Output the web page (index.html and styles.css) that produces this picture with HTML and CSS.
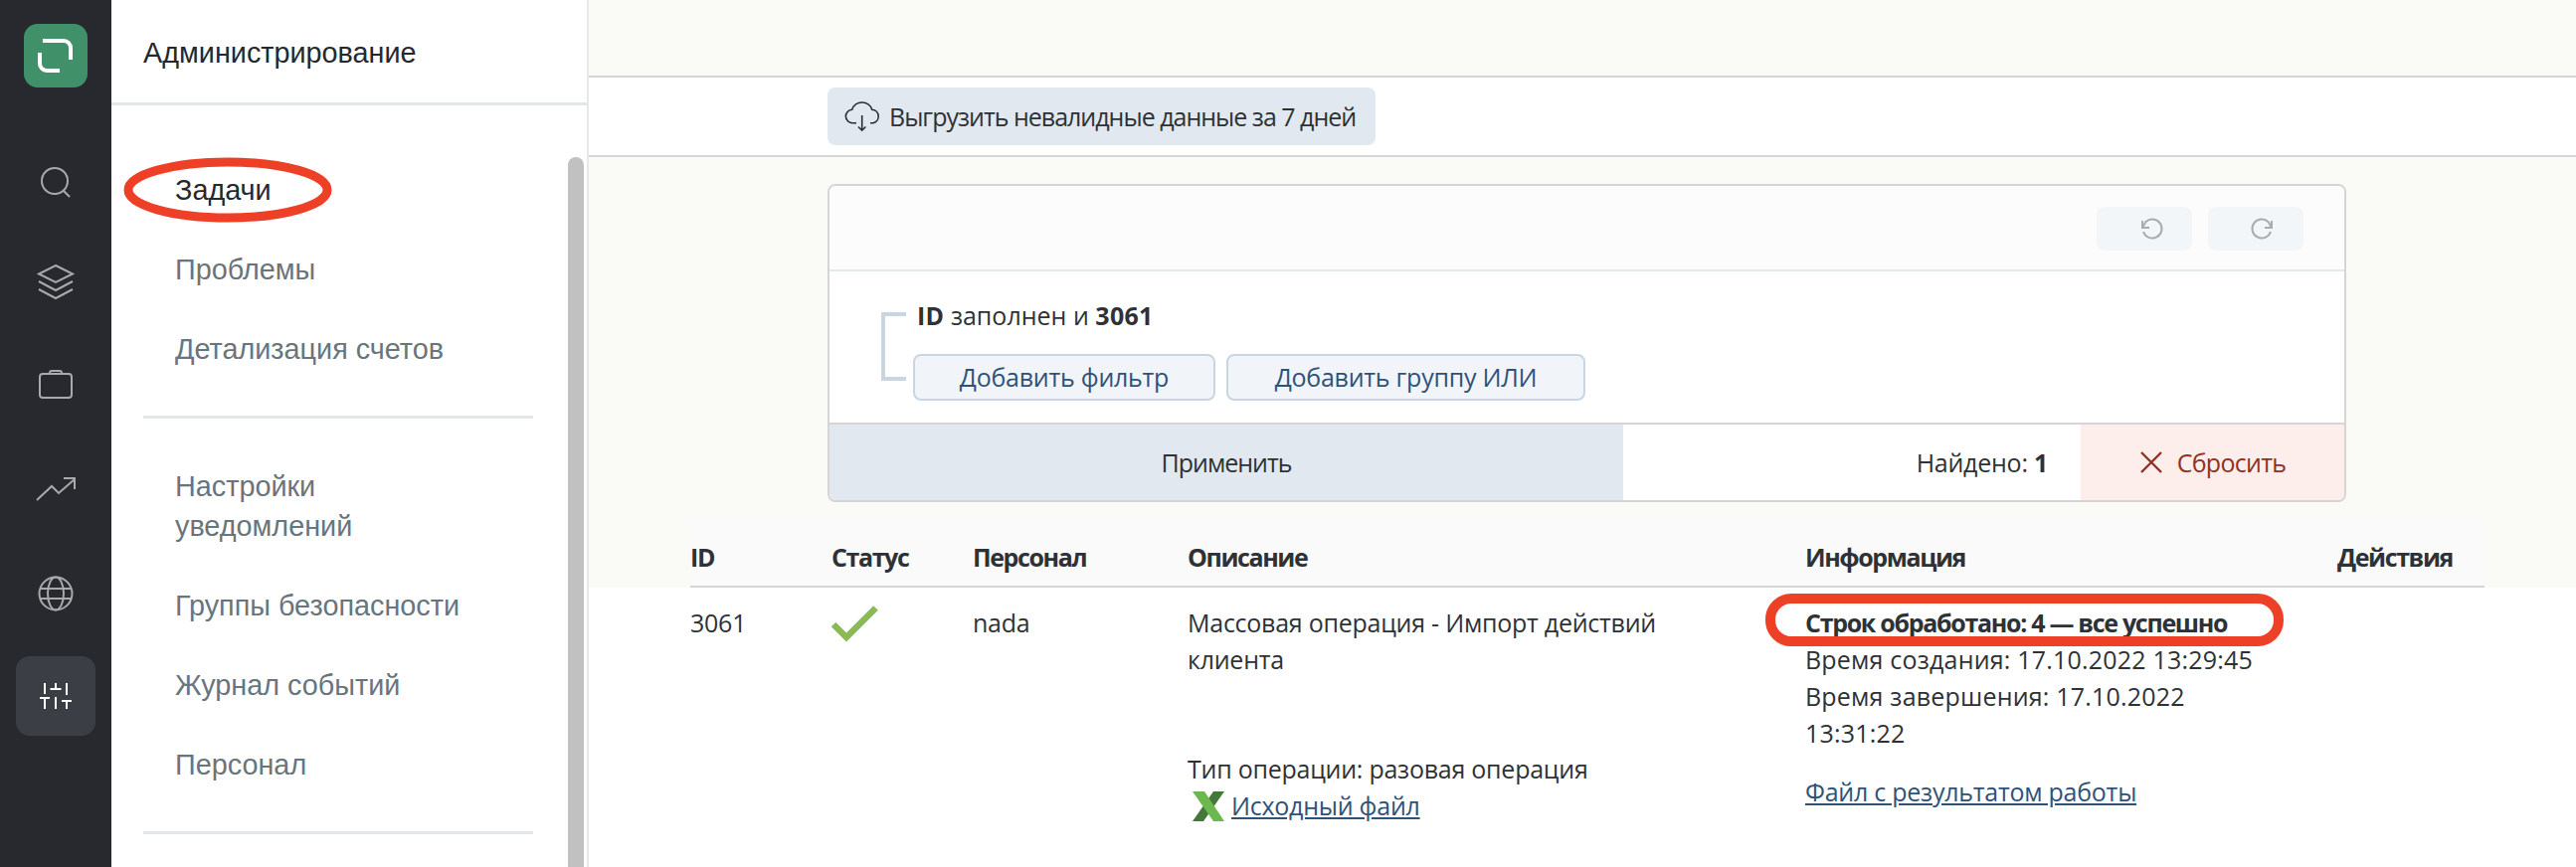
FILE: index.html
```html
<!DOCTYPE html>
<html lang="ru">
<head>
    <meta charset="UTF-8">
    <title>Администрирование</title>
    <link rel="stylesheet" href="styles.css">
</head>
<body>
    <div class="app">
        <nav class="rail">
            <div class="logo">
                <svg width="64" height="64" viewBox="0 0 64 64" fill="none" stroke="#fff" stroke-width="4">
                    <path d="M19 17h21a7 7 0 0 1 7 7v12"/>
                    <path d="M16 29v11a7 7 0 0 0 7 7h13"/>
                </svg>
            </div>
            <a class="rail-item">
                <svg width="40" height="40" viewBox="0 0 40 40" fill="none" stroke="#a8a9ab" stroke-width="2">
                    <circle cx="19" cy="19" r="13"/>
                    <path d="M28 29l6 6"/>
                </svg>
            </a>
            <a class="rail-item">
                <svg width="40" height="40" viewBox="0 0 40 40" fill="none" stroke="#a8a9ab" stroke-width="2">
                    <path d="M20 1L37 9.500 20 18 3 9.500z"/>
                    <path d="M3 17l17 9 17-9"/>
                    <path d="M3 25l17 9 17-9"/>
                </svg>
            </a>
            <a class="rail-item">
                <svg width="40" height="40" viewBox="0 0 40 40" fill="none" stroke="#a8a9ab" stroke-width="2">
                    <rect x="4" y="6" width="32" height="24" rx="3"/>
                    <path d="M14 6V5a2 2 0 0 1 2-2h8a2 2 0 0 1 2 2v1"/>
                </svg>
            </a>
            <a class="rail-item">
                <svg width="40" height="40" viewBox="0 0 40 40" fill="none" stroke="#a8a9ab" stroke-width="2">
                    <path d="M1 30l15-14 7 7L39 9"/>
                    <path d="M28 8h11v11"/>
                </svg>
            </a>
            <a class="rail-item">
                <svg width="40" height="40" viewBox="0 0 40 40" fill="none" stroke="#a8a9ab" stroke-width="2">
                    <circle cx="20" cy="20" r="16.500"/>
                    <ellipse cx="20" cy="20" rx="8" ry="16.500"/>
                    <path d="M4 15h32M4 25h32"/>
                </svg>
            </a>
            <a class="rail-item active">
                <svg width="40" height="40" viewBox="0 0 40 40" fill="none" stroke="#fff" stroke-width="2">
                    <path d="M9 7v11M4 22h10M9 22v11"/>
                    <path d="M20 7v6M14.500 13h11M20 21v12"/>
                    <path d="M31 7v12M26 25h10M31 25v8"/>
                </svg>
            </a>
        </nav>

        <aside class="panel">
            <header class="panel-title">Администрирование</header>
            <div class="panel-body">
                <div class="panel-nav">
                    <ul class="menu">
                        <li class="current">Задачи</li>
                        <li>Проблемы</li>
                        <li>Детализация счетов</li>
                    </ul>
                    <ul class="menu">
                        <li>Настройки<br>уведомлений</li>
                        <li>Группы безопасности</li>
                        <li>Журнал событий</li>
                        <li>Персонал</li>
                    </ul>
                </div>
                <div class="scroll-track"><div class="scroll-thumb"></div></div>
            </div>
            <svg class="mark-ellipse" width="210" height="68" viewBox="0 0 210 68" fill="none" stroke="#ee4027" stroke-width="9">
                <ellipse cx="105" cy="34" rx="100" ry="28"/>
            </svg>
        </aside>

        <main class="main">
            <div class="topbar"></div>
            <div class="toolbar">
                <button class="export-btn">
                    <svg width="38" height="34" viewBox="0 0 38 34" fill="none" stroke="#2b2e31" stroke-width="1.600">
                        <path d="M13 23.700H9.500A6.700 6.700 0 0 1 8.700 10.300 10.500 10.500 0 0 1 28.700 10.300 6.800 6.800 0 0 1 30 23.700H27"/>
                        <path d="M18.700 16v15M15 27.500l3.700 3.700 3.700-3.700"/>
                    </svg>
                    Выгрузить невалидные данные за 7 дней
                </button>
            </div>
            <div class="filter-area">
                <section class="filter-card">
                    <div class="card-head">
                        <button class="history-btn">
                            <svg width="24" height="24" viewBox="0 0 24 24" fill="none" stroke="#a9acae" stroke-width="2">
                                <path d="M2 4v7h7"/>
                                <path d="M3 15A9.500 9.500 0 1 0 5.300 5.300L2 11"/>
                            </svg>
                        </button>
                        <button class="history-btn">
                            <svg width="24" height="24" viewBox="0 0 24 24" fill="none" stroke="#a9acae" stroke-width="2">
                                <path d="M22 4v7h-7"/>
                                <path d="M21 15A9.500 9.500 0 1 1 18.700 5.300L22 11"/>
                            </svg>
                        </button>
                    </div>
                    <div class="card-body">
                        <div class="bracket"></div>
                        <div class="filter-rules">
                            <p class="rule"><b>ID</b> заполнен и <b>3061</b></p>
                            <div class="rule-actions">
                                <button class="add-btn add-filter">Добавить фильтр</button>
                                <button class="add-btn add-group">Добавить группу ИЛИ</button>
                            </div>
                        </div>
                    </div>
                    <div class="card-foot">
                        <button class="apply-btn">Применить</button>
                        <div class="found">Найдено: <b>1</b></div>
                        <button class="reset-btn">
                            <svg width="24" height="22" viewBox="0 0 24 22" fill="none" stroke="#8f3222" stroke-width="2.400">
                                <path d="M2 1l20 20M22 1L2 21"/>
                            </svg>
                            Сбросить
                        </button>
                    </div>
                </section>
                <div class="table-head">
                    <div class="col-id">ID</div>
                    <div>Статус</div>
                    <div>Персонал</div>
                    <div>Описание</div>
                    <div>Информация</div>
                    <div>Действия</div>
                </div>
            </div>
            <div class="table-row">
                <div>3061</div>
                <div>
                    <svg class="status-ok" width="48" height="40" viewBox="0 0 48 40" fill="none" stroke="#8bb954" stroke-width="6.500">
                        <path d="M2 22l13 13L44.500 5.500"/>
                    </svg>
                </div>
                <div>nada</div>
                <div class="cell-desc">
                    <p class="desc-text">Массовая операция - Импорт действий клиента</p>
                    <p>Тип операции: разовая операция</p>
                    <p class="source-file">
                        <svg width="34" height="30" viewBox="0 0 34 30">
                            <path d="M22 0h11L12 30H1z" fill="#43783a"/>
                            <path d="M1 0h12l20 30H22z" fill="#6cb84f"/>
                        </svg>
                        <a href="#">Исходный файл</a>
                    </p>
                </div>
                <div class="cell-info">
                    <p class="info-main"><b>Строк обработано: 4 — все успешно</b></p>
                    <p class="info-time">Время создания: 17.10.2022 13:29:45</p>
                    <p class="info-time info-end">Время завершения: 17.10.2022 13:31:22</p>
                    <p class="result-file"><a href="#">Файл с результатом работы</a></p>
                    <div class="mark-rect"></div>
                </div>
                <div></div>
            </div>
        </main>
    </div>
</body>
</html>
```

FILE: styles.css
```css
* {
    box-sizing: border-box;
}
html, body {
    margin: 0;
    height: 100%;
    overflow: hidden;
}
p, ul {
    margin: 0;
    padding: 0;
}
button {
    font: inherit;
    color: inherit;
    border: none;
    padding: 0;
    letter-spacing: inherit;
}
.app {
    display: flex;
    height: 872px;
    overflow: hidden;
}

/* left rail */
.rail {
    flex: 0 0 112px;
    background-color: #27292e;
    display: flex;
    flex-direction: column;
    align-items: center;
    padding-top: 24px;
}
.logo {
    width: 64px;
    height: 64px;
    background-color: #40906a;
    border-radius: 14px;
    margin-bottom: 55px;
}
.logo svg {
    display: block;
}
.rail-item {
    flex: 0 0 80px;
    width: 80px;
    border-radius: 14px;
    display: flex;
    align-items: center;
    justify-content: center;
    margin-bottom: 23.400px;
}
.rail-item.active {
    background-color: #3b3e44;
}

/* second column */
.panel {
    flex: 0 0 480px;
    position: relative;
    background-color: #fff;
    border-right: 2px solid #e6e8ea;
    font-family: "Liberation Sans", sans-serif;
    font-size: 28.800px;
    line-height: 40px;
    color: #69757c;
}
.panel-title {
    height: 106px;
    padding: 33px 0 0 32px;
    border-bottom: 3px solid #e2e7ea;
    color: #25292e;
}
.panel-body {
    display: flex;
}
.panel-nav {
    flex: 1;
    padding: 65px 0 0 32px;
}
.menu {
    list-style: none;
    width: 392px;
    padding: 0 0 47px 32px;
    margin-bottom: 48px;
    border-bottom: 3px solid #e2e7ea;
}
.menu li {
    padding: 0 0 40px;
}
.menu li:last-child {
    padding-bottom: 0;
}
.menu .current {
    color: #25292e;
}
.scroll-track {
    flex: 0 0 19px;
    margin-top: 52px;
    height: 720px;
}
.scroll-thumb {
    width: 16px;
    height: 100%;
    background-color: #c1c1c1;
    border-radius: 8px 8px 0 0;
}
.mark-ellipse {
    position: absolute;
    left: 12px;
    top: 157px;
}

/* main area */
.main {
    flex: 1;
    background-color: #fff;
    font-family: "Open Sans", sans-serif;
    font-size: 25px;
    letter-spacing: -0.250px;
    line-height: 37px;
    color: #2e3236;
}
.topbar {
    height: 78px;
    background-color: #fafbf7;
    border-bottom: 2px solid #d5d5d5;
}
.toolbar {
    height: 80px;
    padding: 10px 0 0 240px;
    border-bottom: 2px solid #d5d5d5;
}
.export-btn {
    display: flex;
    align-items: center;
    gap: 8px;
    height: 58px;
    width: 551px;
    padding-left: 16px;
    white-space: nowrap;
    letter-spacing: -1px;
    background-color: #e2e8ef;
    border-radius: 8px;
}
.filter-area {
    background-color: #fafbf7;
    padding-top: 27px;
}
.filter-card {
    margin-left: 240px;
    width: 1527px;
    height: 320px;
    border: 2px solid #d5d5d5;
    border-radius: 8px;
    background-color: #fff;
    overflow: hidden;
}
.card-head {
    height: 86px;
    padding: 21px 41px 0 0;
    display: flex;
    justify-content: flex-end;
    gap: 16px;
    background-color: #fcfcfc;
    border-bottom: 2px solid #e2e8ee;
}
.history-btn {
    width: 96px;
    height: 44px;
    padding-left: 16px;
    background-color: #f3f6f8;
    border-radius: 8px;
    display: flex;
    align-items: center;
    justify-content: center;
}
.history-btn:last-child {
    padding-left: 12px;
}
.card-body {
    height: 152px;
    padding: 26px 0 0 52px;
    display: flex;
}
.bracket {
    width: 25px;
    height: 69px;
    margin-top: 15px;
    border: 4px solid #c9d6e2;
    border-right: none;
}
.filter-rules {
    margin-left: 7px;
}
.rule {
    padding-left: 4px;
    height: 36px;
    line-height: 36px;
    letter-spacing: 0;
}
.rule b {
    letter-spacing: 0.300px;
}
.rule-actions {
    display: flex;
    gap: 11px;
    margin-top: 21px;
    letter-spacing: -0.250px;
}
.add-btn {
    height: 47px;
    background-color: #f1f5f9;
    border: 2px solid #c9d6e2;
    border-radius: 8px;
    color: #2f5279;
}
.add-filter {
    width: 304px;
}
.add-group {
    width: 361px;
}
.card-foot {
    height: 78px;
    display: flex;
    align-items: stretch;
    border-top: 2px solid #d5d5d5;
    line-height: 76px;
}
.apply-btn {
    flex: 0 0 798px;
    background-color: #e2e8ef;
    letter-spacing: -1px;
}
.found {
    flex: 1;
    text-align: right;
    padding-right: 33px;
}
.reset-btn {
    flex: 0 0 265px;
    background-color: #fdeeec;
    color: #8f3222;
    letter-spacing: -0.700px;
    display: flex;
    align-items: center;
    justify-content: center;
    gap: 14px;
}
.table-head {
    display: grid;
    grid-template-columns: 142px 142px 216px 621px 535px 148px;
    margin: 15px 0 0 102px;
    width: 1804px;
    height: 71px;
    padding-top: 22px;
    background-color: #fafafa;
    border-bottom: 2px solid #d5d5d5;
    font-weight: 700;
    letter-spacing: -1.400px;
}
.table-row {
    display: grid;
    grid-template-columns: 142px 142px 216px 621px 535px 148px;
    margin-left: 102px;
    width: 1804px;
    padding-top: 17px;
}
.status-ok {
    display: block;
    margin-top: -2px;
}
.desc-text {
    width: 500px;
    margin-bottom: 73px;
}
.source-file {
    display: flex;
    align-items: center;
    gap: 6px;
    margin-left: 4px;
}
.main a {
    color: #2f5279;
}
.cell-info {
    position: relative;
}
.info-main {
    font-size: 25px;
    letter-spacing: -1.300px;
}
.info-time {
    letter-spacing: 0.200px;
}
.info-end {
    width: 420px;
}
.result-file {
    margin-top: 22px;
}
.mark-rect {
    position: absolute;
    left: -40px;
    top: -11px;
    width: 521px;
    height: 53px;
    border: 10px solid #ee4027;
    border-radius: 26px;
}
```
